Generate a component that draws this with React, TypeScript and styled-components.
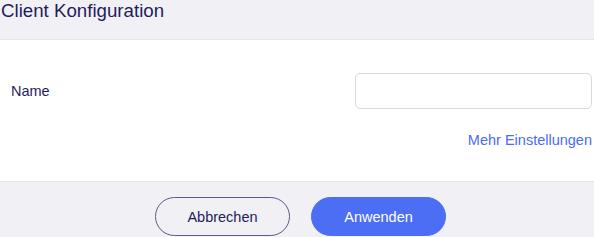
import React from 'react'
import styled, { createGlobalStyle } from 'styled-components'

const GlobalStyle = createGlobalStyle`
  html, body {
    margin: 0;
    padding: 0;
    background: #ffffff;
  }
  body {
    font-family: "Liberation Sans", Arial, sans-serif;
    color: #1f1d5b;
  }
`

const Dialog = styled.div`
  width: 594px;
  height: 237px;
  display: flex;
  flex-direction: column;
  overflow: hidden;
`

const Header = styled.div`
  height: 39px;
  flex-shrink: 0;
  background: #f1f0f5;
  border-bottom: 1px solid #e5e4eb;
  padding-left: 1px;
`

const Title = styled.h1`
  margin: 0;
  font-size: 18.7px;
  font-weight: 400;
  line-height: normal;
  color: #1f1d5b;
`

const Body = styled.div`
  height: 141px;
  box-sizing: border-box;
  padding: 33px 2px 0 11px;
  display: flex;
  flex-direction: column;
  background: #ffffff;
`

const FieldRow = styled.div`
  display: flex;
  align-items: center;
  justify-content: space-between;
`

const Label = styled.label`
  font-size: 14.5px;
  color: #1f1d5b;
`

const Input = styled.input`
  width: 237px;
  height: 36px;
  box-sizing: border-box;
  border: 1px solid #d9d8e0;
  border-radius: 5px;
  background: #fff;
  outline: none;
  padding: 0 10px;
  font-family: inherit;
  font-size: 14.5px;
`

const MoreLink = styled.a`
  align-self: flex-end;
  margin-top: 23px;
  font-size: 14.5px;
  line-height: 17px;
  color: #4a6cf5;
  text-decoration: none;
  cursor: pointer;
`

const Footer = styled.div`
  flex: 1;
  background: #f1f0f5;
  border-top: 1px solid #e5e4eb;
  display: flex;
  justify-content: center;
  align-items: flex-start;
  gap: 21px;
  padding: 15px 0 0 7px;
`

const Button = styled.button<{ $primary?: boolean }>`
  width: 135px;
  height: 39px;
  box-sizing: border-box;
  border-radius: 20px;
  font-family: inherit;
  font-size: 14.5px;
  cursor: pointer;
  border: 1px solid ${p => (p.$primary ? '#4b6ef5' : '#5c5a8c')};
  background: ${p => (p.$primary ? '#4b6ef5' : 'transparent')};
  color: ${p => (p.$primary ? '#ffffff' : '#1f1d5b')};
`

export default function App() {
  return (
    <>
      <GlobalStyle />
      <Dialog>
        <Header>
          <Title>Client Konfiguration</Title>
        </Header>
        <Body>
          <FieldRow>
            <Label htmlFor="client-name">Name</Label>
            <Input id="client-name" type="text" />
          </FieldRow>
          <MoreLink>Mehr Einstellungen</MoreLink>
        </Body>
        <Footer>
          <Button>Abbrechen</Button>
          <Button $primary>Anwenden</Button>
        </Footer>
      </Dialog>
    </>
  )
}
